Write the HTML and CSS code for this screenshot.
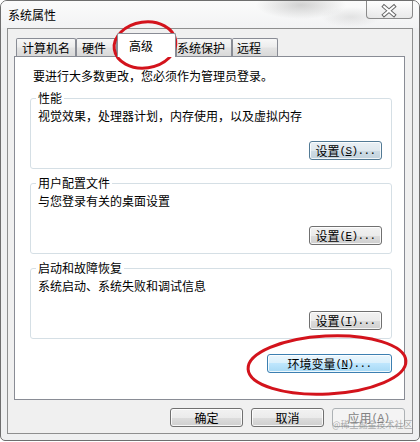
FILE: index.html
```html
<!DOCTYPE html>
<html lang="zh-CN">
<head>
<meta charset="utf-8">
<title>系统属性</title>
<link rel="stylesheet" href="styles.css">
</head>
<body>
<div class="window">
  <div class="titlebar">
    <span class="title">系统属性</span>
    <div class="close">
      <svg width="47" height="18" viewBox="0 0 47 18">
        <path d="M18.5 5.5 L28.5 14 M28.5 5.5 L18.5 14" stroke="#6a6a6a" stroke-width="4" stroke-linecap="square" fill="none"/>
        <path d="M18.5 5.5 L28.5 14 M28.5 5.5 L18.5 14" stroke="#ffffff" stroke-width="2" stroke-linecap="square" fill="none"/>
      </svg>
    </div>
  </div>
  <div class="client">
    <div class="tabs">
      <div class="tab t1">计算机名</div>
      <div class="tab t2">硬件</div>
      <div class="tab sel">高级</div>
      <div class="tab t4">系统保护</div>
      <div class="tab t5">远程</div>
    </div>
    <div class="panel">
      <p class="intro">要进行大多数更改，您必须作为管理员登录。</p>
      <fieldset class="group">
        <legend>性能</legend>
        <p class="desc">视觉效果，处理器计划，内存使用，以及虚拟内存</p>
        <div class="row"><button class="btn focus">设置<span class="lat">(<u>S</u>)...</span></button></div>
      </fieldset>
      <fieldset class="group">
        <legend>用户配置文件</legend>
        <p class="desc">与您登录有关的桌面设置</p>
        <div class="row"><button class="btn">设置<span class="lat">(<u>E</u>)...</span></button></div>
      </fieldset>
      <fieldset class="group">
        <legend>启动和故障恢复</legend>
        <p class="desc">系统启动、系统失败和调试信息</p>
        <div class="row"><button class="btn">设置<span class="lat">(<u>T</u>)...</span></button></div>
      </fieldset>
      <div class="row env-row"><button class="btn hover wide">环境变量<span class="lat">(<u>N</u>)...</span></button></div>
    </div>
    <div class="footer">
      <button class="btn">确定</button>
      <button class="btn">取消</button>
      <button class="btn disabled">应用<span class="lat">(<u>A</u>)</span></button>
    </div>
  </div>
</div>
<svg class="marks" width="420" height="442" viewBox="0 0 420 442">
  <ellipse cx="145" cy="45" rx="31" ry="23" fill="none" stroke="#d3131c" stroke-width="3" transform="rotate(-8 145 45)"/>
  <ellipse cx="327" cy="365" rx="79" ry="29" fill="none" stroke="#d3131c" stroke-width="3" transform="rotate(-3 327 365)"/>
</svg>
<div class="watermark">@稀土掘金技术社区</div>
</body>
</html>
```

FILE: styles.css
```css
* {
  box-sizing: border-box;
}

html,
body {
  margin: 0;
  padding: 0;
}

body {
  width: 420px;
  height: 442px;
  background: #ffffff;
  font-family: "Noto Sans CJK SC", "Noto Sans", sans-serif;
  font-size: 12px;
  line-height: 16px;
  color: #000000;
  position: relative;
  overflow: hidden;
}

.window {
  width: 420px;
  height: 441px;
  border: 1px solid #6e6e6e;
  border-radius: 7px 7px 5px 5px;
  padding: 0 6px 6px 6px;
  display: flex;
  flex-direction: column;
  background: #eff0f1;
  overflow: hidden;
}

.titlebar {
  height: 27px;
  margin: 0 -6px;
  padding: 0 6px;
  display: flex;
  justify-content: space-between;
  align-items: flex-start;
  background:
    radial-gradient(ellipse 45px 14px at 300px 4px, rgba(160, 160, 160, 0.45), rgba(160, 160, 160, 0)),
    radial-gradient(ellipse 30px 10px at 350px 16px, rgba(190, 190, 190, 0.35), rgba(190, 190, 190, 0)),
    linear-gradient(#fbfbfb, #f2f3f4);
}

.title {
  padding: 6px 0 0 1px;
}

.close {
  width: 47px;
  height: 18px;
  border: 1px solid #8a8a8a;
  border-top: none;
  border-radius: 0 0 4px 4px;
  background: linear-gradient(rgba(255, 255, 255, 0.7), rgba(228, 228, 228, 0.7));
  display: flex;
}

.close svg {
  margin-left: -1px;
}

.client {
  flex: 1;
  min-height: 0;
  border: 1px solid #8e8f8f;
  background: #f0f0f0;
  padding: 4px 7px 6px 6px;
  display: flex;
  flex-direction: column;
}

.tabs {
  display: flex;
  align-items: flex-end;
  height: 23px;
  margin-left: 2px;
}

.tab {
  height: 18px;
  border: 1px solid #898c95;
  border-bottom: none;
  border-radius: 2px 2px 0 0;
  background: linear-gradient(#f7f7f7, #ededed 45%, #e3e3e3 55%, #d9d9d9);
  padding-top: 1px;
  white-space: nowrap;
  flex: none;
}

.t1 {
  width: 60px;
  padding-left: 5px;
}

.t2 {
  width: 41px;
  padding-left: 5px;
}

.sel {
  width: 59px;
  height: 24px;
  margin-bottom: -1px;
  padding-top: 4px;
  padding-left: 11px;
  background: #ffffff;
  position: relative;
  z-index: 1;
}

.t4 {
  width: 56px;
  padding-left: 0;
}

.t5 {
  width: 46px;
  padding-left: 4px;
}

.panel {
  flex: 1;
  min-height: 0;
  background: #ffffff;
  border: 1px solid #898c95;
  padding: 11px 12px 0 15px;
  display: flex;
  flex-direction: column;
}

.intro {
  margin: 0 0 0 3px;
}

.group {
  margin: 6px 0 0;
  padding: 2px 9px 8px 7px;
  border: 1px solid #d5dfe5;
  border-radius: 3px;
  min-width: 0;
}

.group legend {
  padding: 0 2px;
  margin-left: -2px;
  line-height: 16px;
}

.desc {
  margin: 0;
}

.row {
  display: flex;
  justify-content: flex-end;
  margin-top: 17px;
}

.env-row {
  margin-top: 15px;
}

.btn {
  font: inherit;
  color: #000000;
  width: 73px;
  height: 19px;
  padding: 0;
  margin: 0;
  border: 1px solid #707070;
  border-radius: 3px;
  background: linear-gradient(#f2f2f2, #ebebeb 50%, #dddddd 50%, #cfcfcf);
  box-shadow: inset 0 0 0 1px rgba(255, 255, 255, 0.8);
  display: flex;
  align-items: center;
  justify-content: center;
  line-height: 16px;
  flex: none;
}

.btn.focus {
  border-color: #527a95;
  background: linear-gradient(#e9f0f5, #dfe8ee 50%, #cfdce5 50%, #c2d2dd);
}

.btn.hover {
  border-color: #3c7fb1;
  background: linear-gradient(#eaf6fd, #d9f0fc 50%, #bee6fd 50%, #a7d9f5);
}

.btn.wide {
  width: 125px;
}

.btn.disabled {
  color: #838383;
  border-color: #adb2b5;
  background: #f4f4f4;
  box-shadow: none;
}

.lat {
  font-family: "Liberation Mono", monospace;
  font-size: 11px;
  letter-spacing: -0.6px;
}

.footer {
  display: flex;
  justify-content: flex-end;
  gap: 8px;
  margin-top: 8px;
}

.marks {
  position: absolute;
  left: 0;
  top: 0;
  pointer-events: none;
}

.watermark {
  position: absolute;
  left: 332px;
  top: 419px;
  font-size: 9px;
  line-height: 12px;
  color: rgba(110, 110, 110, 0.55);
  white-space: nowrap;
}
```
